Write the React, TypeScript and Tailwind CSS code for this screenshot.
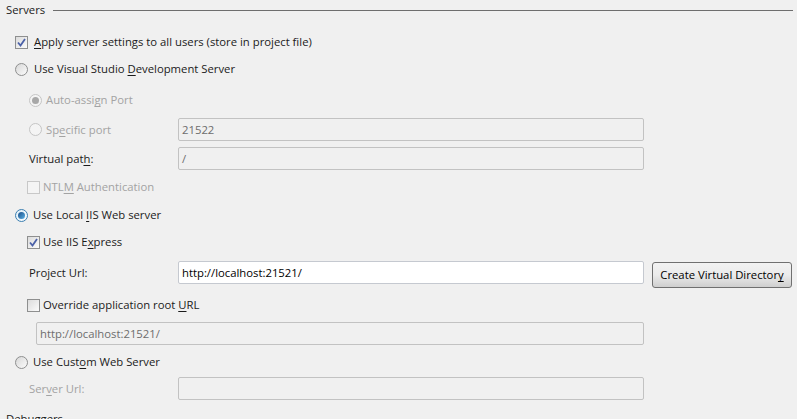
import React from "react";

function Check({ checked, disabled }: { checked?: boolean; disabled?: boolean }) {
  return (
    <span
      className={`flex h-[13px] w-[13px] shrink-0 items-center justify-center border ${
        disabled ? "border-[#c8c8c8] bg-[#f4f4f4]" : "border-[#8e8f8f] bg-gradient-to-br from-[#dcdcdc] to-[#fbfbfb]"
      }`}
    >
      {checked && (
        <svg width="9" height="9" viewBox="0 0 9 9">
          <path d="M1 4.5 L3.5 7.5 L8 1" fill="none" stroke="#4b61a8" strokeWidth="1.8" />
        </svg>
      )}
    </span>
  );
}

function Radio({ checked, disabled }: { checked?: boolean; disabled?: boolean }) {
  return (
    <span
      className={`flex h-[13px] w-[13px] shrink-0 items-center justify-center rounded-full border ${
        disabled
          ? "border-[#c5c5c5] bg-[#f4f4f4]"
          : checked
          ? "border-[#3c7fb1] bg-gradient-to-br from-[#dceef9] to-[#fdfdfd]"
          : "border-[#8e8f8f] bg-gradient-to-br from-[#d8d8d8] to-[#fbfbfb]"
      }`}
    >
      {checked && (
        <span
          className={`h-[7px] w-[7px] rounded-full ${
            disabled ? "bg-[#a8a8a8]" : "bg-gradient-to-br from-[#1c4f8a] to-[#5ab0e4]"
          }`}
        />
      )}
    </span>
  );
}

function Box({ value, white, className }: { value?: string; white?: boolean; className?: string }) {
  return (
    <div
      className={`flex h-[23px] items-center rounded-[2px] border px-[3px] ${
        white ? "border-[#c5c9d0] bg-white text-black" : "border-[#c2c2c2] bg-[#f0f0f0] text-[#6d6d6d]"
      } ${className ?? ""}`}
    >
      {value}
    </div>
  );
}

const u = (s: string) => <span className="underline underline-offset-2">{s}</span>;

export default function App() {
  return (
    <div className="h-[419px] w-[797px] overflow-hidden bg-[#f0f0f0] text-[11.3px] leading-none text-[#1b1b1b] [font-family:'Open_Sans','Noto_Sans',sans-serif]">
      <div className="flex h-[20px] items-center pl-[6px] pr-[4px]">
        <span>Servers</span>
        <span className="ml-[8px] h-px flex-1 bg-[#6e6e6e]" />
      </div>

      <div className="mt-[15px] flex h-[14px] items-center gap-[6px] pl-[15px]">
        <Check checked />
        <span>{u("A")}pply server settings to all users (store in project file)</span>
      </div>

      <div className="mt-[13px] flex h-[14px] items-center gap-[6px] pl-[15px]">
        <Radio />
        <span>Use Visual Studio {u("D")}evelopment Server</span>
      </div>

      <div className="mt-[17px] flex h-[14px] items-center gap-[4px] pl-[29px] text-[#a3a3a3]">
        <Radio checked disabled />
        <span>Auto-assi{u("g")}n Port</span>
      </div>

      <div className="mt-[11px] flex h-[23px] items-center pl-[29px] text-[#a3a3a3]">
        <div className="flex w-[149px] items-center gap-[4px]">
          <Radio disabled />
          <span>Sp{u("e")}cific port</span>
        </div>
        <Box value="21522" className="w-[466px]" />
      </div>

      <div className="mt-[6px] flex h-[23px] items-center pl-[29px] text-[#1b1b1b]">
        <span className="w-[149px]">Virtual pat{u("h")}:</span>
        <Box value="/" className="w-[466px]" />
      </div>

      <div className="mt-[10px] flex h-[14px] items-center gap-[3px] pl-[27px] text-[#a3a3a3]">
        <Check disabled />
        <span>NTL{u("M")} Authentication</span>
      </div>

      <div className="mt-[14px] flex h-[14px] items-center gap-[5px] pl-[15px]">
        <Radio checked />
        <span>Use Local {u("I")}IS Web server</span>
      </div>

      <div className="mt-[13px] flex h-[14px] items-center gap-[3px] pl-[27px]">
        <Check checked />
        <span>Use IIS E{u("x")}press</span>
      </div>

      <div className="mt-[12px] flex h-[27px] items-start pl-[29px]">
        <span className="flex h-[23px] w-[149px] items-center">Pro{u("j")}ect Url:</span>
        <Box value="http://localhost:21521/" white className="w-[466px]" />
        <button className="ml-[8px] mt-[1px] h-[26px] w-[140px] rounded-[3px] border border-[#707070] bg-gradient-to-b from-[#f2f2f2] via-[#ebebeb] to-[#cfcfcf] text-[11.3px] text-black">
          Create Virtual Director{u("y")}
        </button>
      </div>

      <div className="mt-[10px] flex h-[14px] items-center gap-[3px] pl-[27px]">
        <Check />
        <span>Override application root {u("U")}RL</span>
      </div>

      <div className="mt-[10px] flex h-[23px] items-center pl-[36px]">
        <Box value="http://localhost:21521/" className="w-[608px]" />
      </div>

      <div className="mt-[10px] flex h-[14px] items-center gap-[5px] pl-[15px]">
        <Radio />
        <span>Use Cust{u("o")}m Web Server</span>
      </div>

      <div className="mt-[8px] flex h-[23px] items-center pl-[29px] text-[#a3a3a3]">
        <span className="w-[149px]">Ser{u("v")}er Url:</span>
        <Box className="w-[466px]" />
      </div>

      <div className="mt-[13px] pl-[6px]">Debuggers</div>
    </div>
  );
}
